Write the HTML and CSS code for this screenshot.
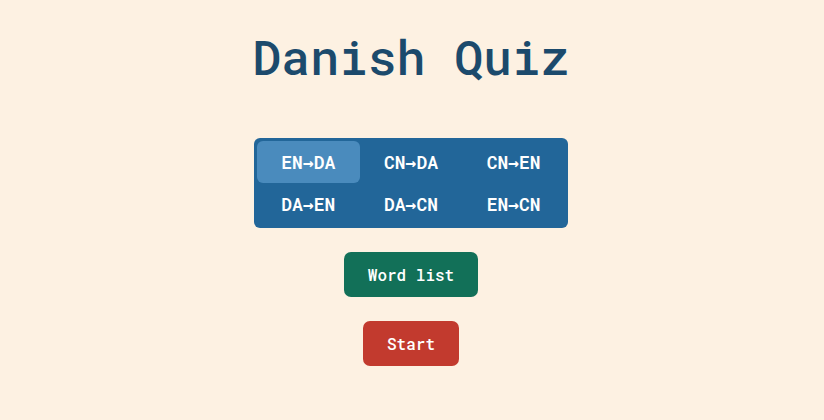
FILE: index.html
```html
<!DOCTYPE html>
<html>
<head>
<meta charset="utf-8">
<link rel="stylesheet" href="styles.css">
</head>
<body>
<main class="app">
  <h1 class="title">Danish Quiz</h1>
  <div class="modes">
    <button class="mode active">EN→DA</button>
    <button class="mode">CN→DA</button>
    <button class="mode">CN→EN</button>
    <button class="mode">DA→EN</button>
    <button class="mode">DA→CN</button>
    <button class="mode">EN→CN</button>
  </div>
  <button class="btn btn-list">Word list</button>
  <button class="btn btn-start">Start</button>
</main>
</body>
</html>
```
FILE: styles.css
```css
html, body {
  margin: 0;
  padding: 0;
  background: #fdf1e2;
}
.app {
  display: flex;
  flex-direction: column;
  align-items: center;
  font-family: "Roboto Mono", "DejaVu Sans Mono", monospace;
  padding-top: 27px;
  padding-right: 2px;
}
.title {
  margin: 0;
  font-size: 48px;
  line-height: 60px;
  font-weight: 500;
  color: #1c4a6c;
}
.modes {
  margin-top: 51px;
  box-sizing: border-box;
  width: 314px;
  display: grid;
  grid-template-columns: repeat(3, 1fr);
  grid-auto-rows: 42px;
  padding: 3px;
  background: #226699;
  border-radius: 6px;
}
.mode {
  border: none;
  background: transparent;
  color: #ffffff;
  font-family: "Roboto Mono", "DejaVu Sans Mono", monospace;
  font-weight: 600;
  font-size: 18px;
  border-radius: 6px;
  padding: 0;
}
.mode.active {
  background: #4a8bbd;
}
.btn {
  border: none;
  border-radius: 7px;
  color: #ffffff;
  font-family: "Roboto Mono", "DejaVu Sans Mono", monospace;
  font-size: 16px;
  font-weight: 500;
  height: 45px;
  padding: 0 24px;
}
.btn-list {
  margin-top: 24px;
  background: #127058;
}
.btn-start {
  margin-top: 24px;
  background: #c23a2e;
}
```
